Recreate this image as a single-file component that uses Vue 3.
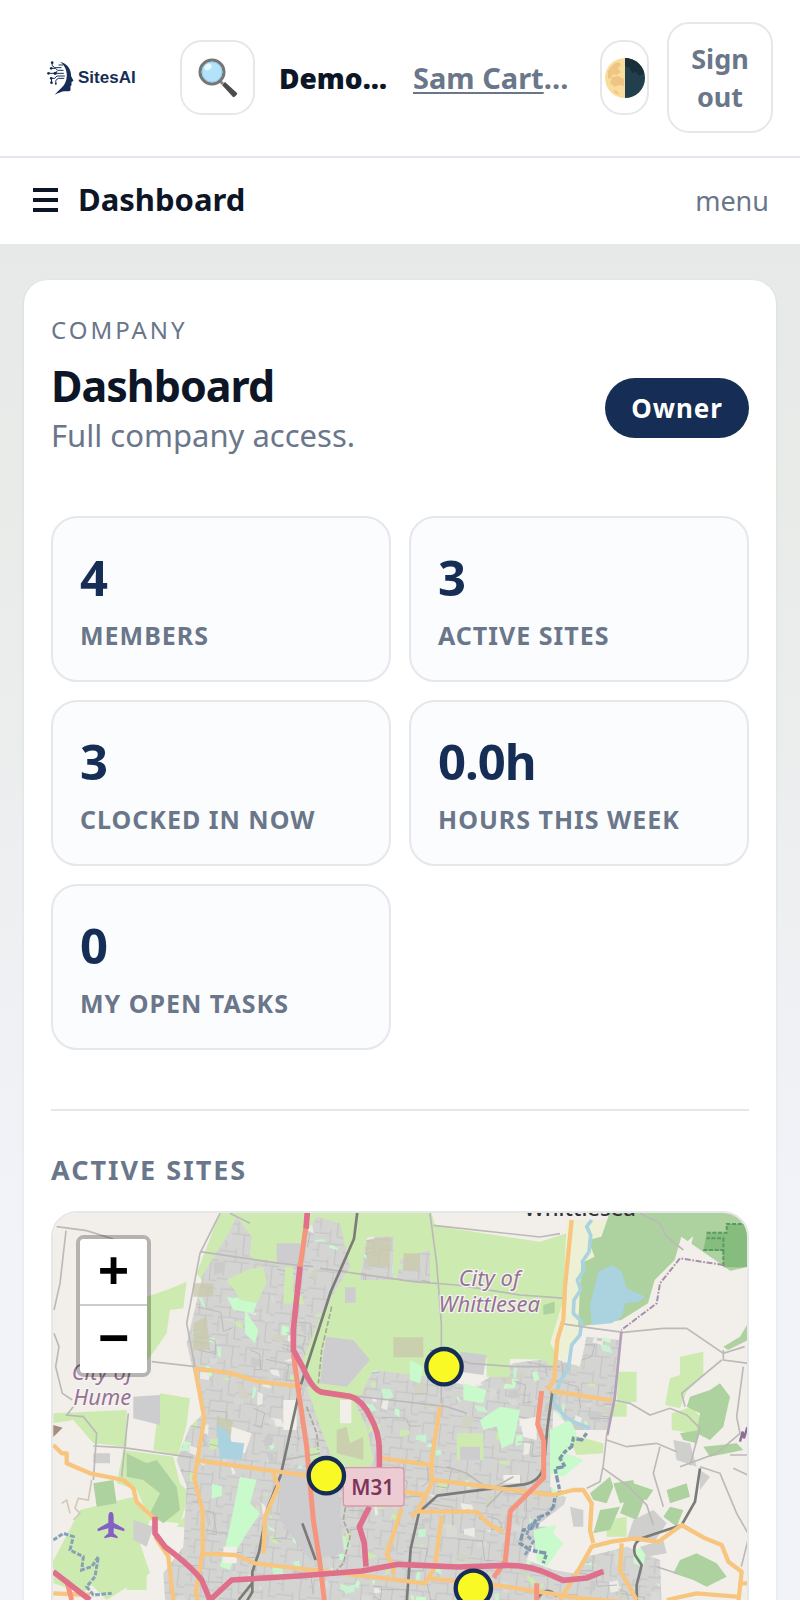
<template>
  <div class="page">
    <header class="topbar">
      <a class="logo" href="#" aria-label="SitesAI">
        <svg class="logo-mark" viewBox="0 0 80 102" aria-hidden="true">
          <path d="M38 2C56 6 69 19 71 37l1 9 7 13-6 4 0 10-3 3 0 11c-1 6-12 3-20 4-9 2-18 6-27 10 9-12 26-22 32-38C64 42 58 15 38 2z" fill="#162e55" />
          <g fill="none" stroke="#162e55" stroke-width="3">
            <path d="M15 6v8l8 6h20M13 22h12l6 6h18M5 37h20l5-7M22 37h28M13 52h10l6-7h24M13 64V54M26 66v-8l7-6h18M34 12h14" />
          </g>
          <g fill="#162e55">
            <circle cx="15" cy="5" r="4" />
            <circle cx="12" cy="22" r="4" />
            <circle cx="4" cy="37" r="4" />
            <circle cx="24" cy="37" r="5" />
            <circle cx="12" cy="52" r="4" />
            <circle cx="13" cy="65" r="4" />
            <circle cx="26" cy="68" r="3" />
          </g>
        </svg>
        <span>SitesAI</span>
      </a>

      <button class="icon-button" type="button" aria-label="Search">
        <svg class="emoji" viewBox="0 0 40 40" aria-hidden="true">
          <path d="M24 27l3-3 12 11c1 1-3 5-4 4z" fill="#4b4b4b" />
          <path d="M22 23l3 3" stroke="#8a8a8a" stroke-width="3" />
          <circle cx="14" cy="14" r="12" fill="#b3e2fb" stroke="#757575" stroke-width="3" />
          <circle cx="14" cy="14" r="10" fill="none" stroke="#92cbe9" stroke-width="1" />
          <ellipse cx="10" cy="9" rx="4" ry="3" fill="#e6f7ff" transform="rotate(-35 10 9)" />
        </svg>
      </button>

      <div class="names">
        <strong class="company">Demo…</strong>
        <span class="user"><a href="#">Sam Cart</a>…</span>
      </div>

      <button class="icon-button icon-button--narrow" type="button" aria-label="Theme">
        <svg class="emoji" viewBox="0 0 40 40" aria-hidden="true">
          <circle cx="20" cy="20" r="20" fill="#f9dd9f" />
          <path d="M3 13c3-5 6-8 10-9l3 2-3 5 3 3-4 3-4-1-3 5-2-1z" fill="#f0c583" />
          <path d="M7 19l6-1 6 3v7l-5-1-4 2-5-4z" fill="#f0c583" />
          <path d="M8 32l4 1 3 4-5-2z" fill="#f0c583" />
          <path d="M20 0a20 20 0 0 1 0 40z" fill="#213f4d" />
          <path d="M20 0a20 20 0 0 1 19 15l-5 3-3-4-4 1-2-5-5-2z" fill="#192f3a" />
        </svg>
      </button>
      <button class="sign-out" type="button">Sign out</button>
    </header>

    <nav class="menubar">
      <svg class="burger" viewBox="0 0 25 25" aria-hidden="true">
        <path d="M0 3h25M0 13h25M0 23h25" stroke="#0d1626" stroke-width="4" />
      </svg>
      <span class="menubar-title">Dashboard</span>
      <a class="menubar-link" href="#">menu</a>
    </nav>

    <main class="card">
      <div class="card-head">
        <div>
          <p class="eyebrow">COMPANY</p>
          <h1>Dashboard</h1>
          <p class="subtitle">Full company access.</p>
        </div>
        <span class="role">Owner</span>
      </div>

      <div class="stats">
        <div v-for="stat in stats" :key="stat.label" class="stat">
          <div class="stat-value">{{ stat.value }}</div>
          <div class="stat-label">{{ stat.label }}</div>
        </div>
      </div>

      <section class="sites">
        <h2>ACTIVE SITES</h2>
        <div class="map">
          <svg class="map-canvas" viewBox="36 39 2088 1560" preserveAspectRatio="xMidYMin slice" role="img" aria-label="Map of active sites">
            <defs>
              <pattern id="streets" width="92" height="84" patternUnits="userSpaceOnUse" patternTransform="rotate(6)">
                <rect width="92" height="84" fill="#d4d4d3" />
                <path d="M0 10h50v30H18v44M50 10V0M50 40h42M70 40v44M0 62h18M70 18h22M70 0v18" fill="none" stroke="#c3c3c3" stroke-width="3" />
              </pattern>
              <clipPath id="urban-clip"><path :d="urban" /></clipPath>
            </defs>

            <rect x="36" y="36" width="2088" height="1563" fill="#f2efea" />

            <!-- parks and farmland -->
            <g fill="#cdebb0">
              <path d="M540 36H1174L1186 78 1500 125 1580 100 1590 140 1560 370 1540 480 1200 470V640H1000V820L800 760 720 560 470 220z" />
              <path d="M320 290l60-20 60-25-10 80-40 5-10 70-60 85z" />
              <path d="M40 640l220-10v110l-100-10-60-70-60 10z M360 580l90 15-10 80-25 90-75-15z M250 750l150 20 20 80 30 30-30 90-90-10-40-90-60-20z M120 930l160-40 50 70-30 70 30 90-50 30-80 50-80-80-90-20z M40 1080l110-20 30 70-50 50-90-30z M440 940l140 10-10 40-160-10z M520 590h50v100h-50z M260 1120h60v50h-60z" />
              <path d="M1735 515h55v90l-60 5z M1920 470l70-15v70l-50 50-20 50-45-10 15-80 30-10z M1895 640l60-20 50 60-50 20-60-10z M1710 610h50v40h-50z M1580 700l110 30v30l-80 5z M1700 960l60-10v60h-60z" />
            </g>

            <path :d="urban" fill="url(#streets)" />
            <g clip-path="url(#urban-clip)">
              <path v-for="(patch, i) in patches" :key="i" :d="patch.d" :fill="patch.fill" />
              <path v-for="(street, i) in streets" :key="'s' + i" :d="street" fill="none" stroke="#bbb" stroke-width="3" />
            </g>

            <!-- open ground between the suburbs -->
            <g fill="#cdebb0">
              <path d="M560 240l60-30 50-10 10 50-30 60-40 10-20-40z M735 200h25v110h-30z M640 90h90v90h-90z" />
              <path d="M800 560l60 10 80 30 40 80 20 100-50 90-80-110-30-80z M900 500h50v70h-50z M1250 700h80v80h-80z M1340 460h70v70h-70z M1500 480l40-10v20z" />
            </g>
            <g fill="#cdcccf">
              <path d="M860 410l80 10 50 60-70 80-80-10 10-90z M280 590l80-5v90l-80-20z M915 262h32v46h-32z M1260 455l80 10-10 60-70-10z M720 800l170 20 20 240-100 20-90-120z M1260 740h60v40h-60z M710 130h70v60h-70z M1480 980h60v80h-60z" />
            </g>
            <g fill="#c9c9ae">
              <path d="M1060 412h90v60h-90z M980 120l70-10v90h-70z M890 690l30-10 10 50 40-20v70l-80-20z M1090 160h50v50h-50z M460 370l40-20 10 100h-50z M460 250h60v40h-60z M530 650l50 10-10 50h-40z" opacity=".8" />
            </g>
            <g fill="#c8facc">
              <path d="M1270 550l70 20-10 40-60-10z M1320 660l60-40 60 10-20 100-30 10-20-60-40 10z M600 830l50 10-20 70 30 30-40 60-30 50-20 60-30-10 30-120z M560 290l90 20-10 30-60-10z M615 330l40 60-10 40-30-30z M1530 690l60-30 20 40-30 60 50 20-60 50-40-10z M1480 990l90-20v60l-50 70-30-20z M1780 1050l40-10-10 60-30-10z M1110 480l40 20-10 50-30-10z" />
            </g>
            <path d="M1580 60h130v80l-30 10-20 80-30 140-60 120-40-60 40-130z" fill="#eef0d5" />
            <path d="M575 680l60 20-20 60-45-10z" fill="#f2efea" />
            <path d="M900 600h34v70h-34z M1440 660l50-10v70l-40-10z M1390 825h50v25h-50z M730 600h40v90h-40z M550 1040h40v50h-40z" fill="#f2efea" />
            <path d="M1580 890l60 10v60l20 90-60 60-30-20v-60l-30-30z" fill="#f2efea" />

            <!-- forest -->
            <g fill="#aed1a0">
              <path d="M1710 36H2090l34 20V210l-30 20-40-30-130-90-20 70-60 60-20 70-80 50-130 20 10-190 40-20-20-50 40-10z" />
              <path d="M260 760l60 30 30-10 60 80 10 70-50 40-40-30 30-60-50-40-50-10z M160 850l60-10 10 70-60 10z" />
              <path d="M1950 590l60-20 30-20 30 40-20 90-40 40-40-20 10-60-40-20z M1990 740l100-10 20 20-100 20z M2050 440l50-30 24-40v50l-60 30z" />
              <path d="M1650 880l60-50 10 30-20 50-40-10z M1720 850l60-10 10 60-50 10z M1770 860l50 20-30 80-50-20z M1680 930l60-10-30 70-50 10z M1880 870l60-20 10 40-60 20z M1890 920l40 10-20 50-40-30z M1920 1080l50-20 60 30 30 40-60 30-40-20-60-20z M1920 700l60-10-10 40-40-10z M1780 850l60 20-20 30-40-10z M1510 315l34-10v34l-34 5z" />
            </g>
            <path d="M1926 170l10-40 24-22-8 32 30 20 15 30-30 10z" fill="#f2efea" />
            <path d="M2000 98h60V72h64v130h-74v-50h-60z" fill="#86bd7e" />
            <path d="M2000 98h60V72h64M2050 152v50M1990 150h60v-35h-50" fill="none" stroke="#579b62" stroke-width="6" stroke-dasharray="12 5" />
            <path d="M2060 215l64-15v40l-10 20-60-10z M1950 200l110 10 10 50 54-30v120h-200l-60-60z" fill="#f2efea" />
            <g fill="#cfcfce">
              <path d="M1780 960l60-30 40 40-40 60-80-10z M1800 1040l70-20 10 40-60 10z M1900 720l50 10 20 70-60-20z M1980 810l30 20-30 40z M160 760h50v30h-50z M280 960l60 20-20 60-40-20z M1590 920l40 10v50h-30z" />
            </g>

            <!-- water -->
            <path d="M530 675l30 15 15 35 38 5-8 50-65-5-5-40z" fill="#aad3df" />
            <path d="M1675 215l40-20 30 20 15 50 55 25-20 15-40 5-10 40-30 20-60 5-5-60z" fill="#aad3df" />
            <path d="M1655 60l-15 20 12 25-5 50-20 30 5 25-20 30 10 30-20 30-2 40 25 25-5 40-25 30-10 70-25 40-20 60 30 40 30 20 50 20" fill="none" stroke="#aad3df" stroke-width="11" stroke-linejoin="round" />
            <path d="M1640 700l-15 20-25-5-5 25-20 15-15 20 15 25-30 5 5 25 10 45-15 15-5 30-15 20-35 15-15 30-25 5-10 40 30 20 50 10-10 30" fill="none" stroke="#7f97ad" stroke-width="10" stroke-dasharray="14 5 22 6" />
            <path d="M1500 950l-10 30-20-10-10 35 20 20-25 40M40 1020l30-20 30 10-10 40 40 20-5 40 30-10 20-30-10 60-25 30 20 25 55-5" fill="none" stroke="#87a2b7" stroke-width="9" stroke-dasharray="14 5" />
            <path d="M155 840l-10 60-30-5-10 30 15 15-20 20M90 940l-10-40-15 10" fill="none" stroke="#d3c8b8" stroke-width="5" />

            <!-- minor roads and boundaries -->
            <g fill="none" stroke="#bcb9b9" stroke-width="5">
              <path d="M50 80l90 12 80 25M78 92L60 250 42 330M42 400l15 40-10 60 20 80 30 20" />
              <path d="M540 40L480 160 440 370l25 130-130-15M100 620l-20 25 50 5 40 50-10 140M160 738l90 5 210 30M265 640l-20 190" />
              <path d="M480 155l240 35 100 10M840 205l280 40 130 10 190 30 140 10M1170 40l20 150 14 180 0 240" />
              <path d="M1180 76l320 35 60-10M1560 370l100 15 90 12 120-12h70l110 75 64-20M1720 600l50 10 60 35 60-20 50 20 40 40-30 110" />
              <path d="M1935 620l-10-40 120-100M2050 450v30l74 10M2110 500l-20 150 10 50-70 60-110 40M1700 720l60 20 90-10 60 25M1860 740l-20 80 30 100M1640 865l40-20 10-50 10-90M1690 805l70 50 60 60 20 60" />
              <path d="M1980 800l60 20 50 120 34 60M2080 805l44 20M2070 765h54M2124 1020l-20 80M1850 1100l60 20M570 40l60 30M1170 450l120 40 130 10 140 0" />
              <path d="M870 580l180 20 170 20 60 20M1220 800l60 20 70 50 70-40M1340 920l60-60M840 760l-110 20M1800 40l60 30 20 40 50 40" />
            </g>
            <path d="M1744 395l-20 200-22 110" fill="none" stroke="#b39fb7" stroke-width="8" />
            <path d="M2050 195l-130-20-60 75-10 60-106 80" fill="none" stroke="#a590aa" stroke-width="6" stroke-dasharray="18 5 5 5" />
            <path d="M2100 725l8-30 4 20 10-34" fill="none" stroke="#8f6b99" stroke-width="7" />
            <path d="M875 320l-30 130-10 100M800 620l30 80 5 50M920 900l-10 60 20 50-20 80-20 20" fill="none" stroke="#aaa69f" stroke-width="5" stroke-dasharray="16 6" />

            <!-- rail -->
            <g fill="none" stroke="#7b7c78" stroke-width="8" stroke-linejoin="round">
              <path d="M952 36l-10 80-70 160-90 280-60 270-40 100-25 130-20 60v60l-30 50M636 1150l-40 50" />
              <path d="M1537 575l-15 110-10 110q-10 50-60 58l-260 34-55 50-25 110-15 200M787 970l40 110" />
              <path d="M1980 805l-15 100-40 70-120 40q-30 15-20 50l20 30-15 60v60M1490 1200q30-50 60-10" />
            </g>

            <!-- primary roads -->
            <g fill="none" stroke="#f8c57e" stroke-width="13" stroke-linejoin="round">
              <path d="M465 505l110 15 80 25 130 15M465 505l28 150-30 180 25 100v120l-20 120 10 60M465 780l250 35 180 25M40 735l25 25h15v30l70 30 100 20 30 25 10 40 50 50M345 1010l40 60 15 130M485 1060l100 5 60 25 260 30 250 30 30-50 20-150M700 820l15 40-40 90-5 110" />
              <path d="M1200 620l-25 160 0 70-40 80-20 20M1025 775l150 20M1090 875l70 10M1180 840l200 25 160 20 60-15h30l25 40-5 80 10 40M1130 935h180l40 40 40 20M1085 925l-45 140 20 30v30M1165 1135l200 20 260 40 120 10" />
              <path d="M1595 60l-20 200-5 100-18 60-10 120-20 30M1535 573l180 28M1560 1200l50-80 45-80 60-15 70-10 70 10 70-50 70 40 50 20 20 50 40 30-10 90M1745 1030l-5 80 50 90M1880 1200l90-20 120 10M2095 1150h30M40 1180l110 5" />
            </g>

            <!-- trunk roads -->
            <g fill="none" stroke="#f6957d" stroke-width="15" stroke-linejoin="round">
              <path d="M797 86l-17 116M760 460l15 110 25 170 20 220 20 130 15 130M1505 573l-12 100 18 50 0 110-100 100-15 150-35 50M1490 1200v-50" />
              <path d="M80 1140l15 60" />
            </g>

            <!-- motorways -->
            <g fill="none" stroke="#e06f8b" stroke-width="17" stroke-linejoin="round">
              <path d="M802 36l-4 50M780 200l-20 190 0 60 30 55q30 70 60 72l80 12q35 10 60 60 30 50 28 110v50M988 920l-30 60 15 50 5 70M345 950v50l30 40q80 60 110 100l25 60M510 1200l65-60 200-12 190-15 110-20 180 8 150-5q70 0 130 30l35 15 70-7 50-20M40 1115l110 85" />
            </g>

            <path d="M213 936q8 0 8 16v16l32 18v8l-32-9v15l12 10v5l-20-5-20 5v-5l12-10v-15l-32 9v-8l32-18v-16q0-16 8-16z" fill="#8461c4" />
            <path d="M40 675l28 8-28 28z" fill="#a58e7f" />

            <g class="map-label">
              <text x="187" y="539">City of</text>
              <text x="187" y="616">Hume</text>
              <text x="1348" y="259">City of</text>
              <text x="1348" y="336">Whittlesea</text>
            </g>
            <text class="town-label" x="1620" y="49">Whittlesea</text>

            <rect x="910" y="803" width="182" height="115" rx="10" fill="#eccbd3" stroke="#d798a8" stroke-width="4" />
            <text class="shield-label" x="998" y="886">M31</text>

            <circle v-for="site in sites" :key="site.x" :cx="site.x" :cy="site.y" r="53" fill="#f9f926" stroke="#162e55" stroke-width="13" />
          </svg>
          <div class="zoom-control">
            <button type="button" aria-label="Zoom in">+</button>
            <button type="button" aria-label="Zoom out">−</button>
          </div>
        </div>
      </section>
    </main>
  </div>
</template>

<script setup>
const stats = [
  { value: '4', label: 'MEMBERS' },
  { value: '3', label: 'ACTIVE SITES' },
  { value: '3', label: 'CLOCKED IN NOW' },
  { value: '0.0h', label: 'HOURS THIS WEEK' },
  { value: '0', label: 'MY OPEN TASKS' },
];

const sites = [
  { x: 1212, y: 500 },
  { x: 859, y: 827 },
  { x: 1300, y: 1165 },
];

const urban =
  'M440 430L490 220 560 110 590 50 635 110 630 170 720 190 780 130 830 50 900 70 930 200 850 330 780 500 840 590 960 590 ' +
  '1000 510 1160 530 1300 560 1420 490 1540 475 1620 500 1640 410 1740 420 1725 600 1700 690 1600 690 1540 630 ' +
  '1530 860 1590 900 1500 970 1460 1080 1540 1110 1600 1120 1640 1070 1760 1040 1860 1080 1880 1596 400 1596 ' +
  '370 1120 430 1040 440 860 410 780 450 680 490 640zM980 110L1060 110 1060 240 960 240zM1080 180L1170 150 1170 250 1070 240z';

// Fixed seed, so the suburbs look the same on every render
let seed = 31;
const random = () => {
  seed = (seed * 16807) % 2147483647;
  return seed / 2147483647;
};
const between = (min, max) => Math.round(min + random() * (max - min));

const fills = ['#c8facc', '#c8f3d0', '#cdebb0', '#d9d9d7', '#cbcbcb', '#d3d3c4', '#ecebe6', '#d6d6d6'];
const patches = Array.from({ length: 620 }, (_, i) => {
  const x = between(400, 1880);
  const y = between(60, 1560);
  const w = between(8, 34);
  const h = between(6, 34);
  return {
    d: `M${x} ${y}l${w} ${between(-8, 10)} ${between(-8, 12)} ${h} ${-w} ${between(-12, 10)}z`,
    fill: fills[i % fills.length],
  };
});

const streets = Array.from({ length: 150 }, () => {
  const a = between(25, 80);
  const b = between(20, 70);
  return `M${between(400, 1880)} ${between(60, 1560)}l${a} ${between(0, 18)} ${between(-12, 12)} ${b} ${between(-60, 60)} ${between(-14, 14)}`;
});
</script>

<style>
body {
  margin: 0;
  background: #f2f3f9;
}
</style>

<style scoped>
.page {
  box-sizing: border-box;
  min-height: 100vh;
  padding-bottom: 36px;
  background: linear-gradient(180deg, #e5e8e8 0, #e8ebe8 500px, #f2f3f9 1250px);
  color: #0d1626;
  font-family: "Noto Sans", sans-serif;
}

.page * {
  box-sizing: border-box;
}

p,
h1,
h2 {
  margin: 0;
}

button {
  font-family: inherit;
  cursor: pointer;
}

.topbar {
  display: flex;
  align-items: center;
  gap: 18px;
  padding: 22px 27px 23px;
  border-bottom: 2px solid #e5e7ee;
  background: #fff;
}

.logo {
  display: flex;
  flex: none;
  align-items: center;
  gap: 4px;
  width: 135px;
  padding-left: 20px;
  color: #162e55;
  font: 700 17px/34px "Liberation Sans", sans-serif;
  text-decoration: none;
}

.logo-mark {
  width: 27px;
  height: 34px;
}

.icon-button {
  display: flex;
  flex: none;
  align-items: center;
  justify-content: center;
  width: 75px;
  height: 75px;
  padding: 0;
  border: 2px solid #e5e7eb;
  border-radius: 22px;
  background: #fff;
}

.icon-button--narrow {
  width: 49px;
}

.emoji {
  flex: none;
  width: 40px;
  height: 40px;
}

.names {
  display: flex;
  flex: 1;
  gap: 24px;
  min-width: 0;
  margin-left: 6px;
  font-size: 29px;
  font-weight: 700;
  line-height: 40px;
  white-space: nowrap;
}

.company {
  width: 110px;
  font-size: 28px;
}

.user,
.user a {
  color: #6a7689;
}

.user a {
  text-decoration-thickness: 2px;
  text-underline-offset: 3px;
}

.sign-out {
  flex: none;
  width: 106px;
  padding: 16px 18px 15px;
  border: 2px solid #e5e7eb;
  border-radius: 22px;
  background: #fff;
  color: #6a7689;
  font-size: 27px;
  font-weight: 700;
  line-height: 38px;
}

.menubar {
  display: flex;
  align-items: baseline;
  padding: 19px 31px 23px 33px;
  background: #fff;
}

.burger {
  align-self: center;
  width: 25px;
  height: 25px;
  margin-right: 20px;
}

.menubar-title {
  font-size: 31px;
  font-weight: 700;
  line-height: 44px;
}

.menubar-link {
  margin-left: auto;
  color: #6a7689;
  font-size: 27px;
  line-height: 38px;
  text-decoration: none;
}

.card {
  margin: 36px 24px 0;
  padding: 28px 27px;
  border-radius: 24px;
  background: #fff;
  box-shadow: 0 1px 3px rgba(20, 30, 70, 0.1);
}

.card-head {
  display: flex;
  align-items: center;
  justify-content: space-between;
  margin-bottom: 8px;
}

.card-head > div {
  padding: 4px 0 49px;
}

.eyebrow {
  color: #6a7689;
  font-size: 24px;
  line-height: 36px;
  letter-spacing: 3px;
}

h1 {
  margin-top: 13px;
  font-size: 43px;
  font-weight: 700;
  line-height: 50px;
  letter-spacing: -1px;
}

.subtitle {
  color: #6a7689;
  font-size: 31px;
  line-height: 48px;
}

.role {
  padding: 10px 26px;
  border-radius: 30px;
  background: #162e55;
  color: #fff;
  font-size: 26px;
  font-weight: 700;
  line-height: 40px;
  letter-spacing: 1px;
}

.stats {
  display: grid;
  grid-template-columns: 1fr 1fr;
  gap: 18px;
}

.stat {
  padding: 29px 27px 27px;
  border: 2px solid #e5e7eb;
  border-radius: 26px;
  background: #fafcfe;
}

.stat-value {
  margin-bottom: 10px;
  color: #162e55;
  font-size: 49px;
  font-weight: 700;
  line-height: 60px;
  letter-spacing: -1px;
}

.stat-label {
  color: #6a7689;
  font-size: 25px;
  font-weight: 700;
  line-height: 36px;
  letter-spacing: 1px;
}

.sites {
  margin-top: 59px;
  padding-top: 39px;
  border-top: 2px solid #e5e7eb;
}

h2 {
  margin-bottom: 21px;
  color: #6a7689;
  font-size: 27px;
  font-weight: 700;
  line-height: 40px;
  letter-spacing: 2px;
}

.map {
  position: relative;
  overflow: hidden;
  border: 2px solid #e5e7eb;
  border-radius: 26px;
}

.map-canvas {
  display: block;
  width: 100%;
  height: 520px;
}

.map-label {
  fill: #957391;
  stroke: #f6f2f4;
  stroke-width: 8px;
  paint-order: stroke;
  font-size: 66px;
  font-style: italic;
  text-anchor: middle;
}

.town-label {
  fill: #333;
  font-size: 66px;
  font-weight: 500;
  text-anchor: middle;
}

.shield-label {
  fill: #7c345a;
  font-size: 62px;
  font-weight: 600;
  text-anchor: middle;
}

.zoom-control {
  position: absolute;
  top: 22px;
  left: 23px;
  overflow: hidden;
  border: 4px solid rgba(0, 0, 0, 0.25);
  border-radius: 8px;
  background-clip: padding-box;
}

.zoom-control button {
  display: block;
  width: 67px;
  height: 67px;
  padding: 0 0 6px;
  border: 0;
  background: #fff;
  color: #000;
  font: 700 50px/60px "DejaVu Sans Mono", monospace;
}

.zoom-control button:first-child {
  border-bottom: 2px solid #ccc;
}
</style>
